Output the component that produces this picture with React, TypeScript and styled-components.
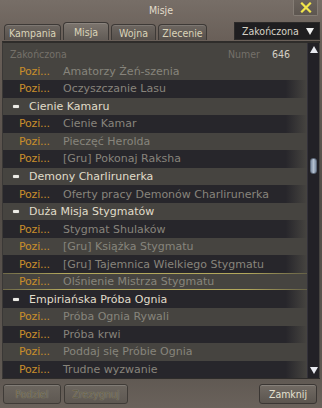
import React from "react";
import styled, { createGlobalStyle, css } from "styled-components";

const Global = createGlobalStyle`
  html, body { margin: 0; padding: 0; background: #5a534d; }
  body { width: 322px; height: 408px; overflow: hidden; }
`;

const condensed = css`
  font-family: "DejaVu Sans Condensed", "DejaVu Sans", sans-serif;
  font-stretch: condensed;
  font-size: 10.5px;
`;

const Window = styled.div`
  width: 322px;
  height: 408px;
  display: flex;
  flex-direction: column;
  font-family: "DejaVu Sans", sans-serif;
  font-size: 11px;
  background: linear-gradient(180deg, #776e67 0%, #695f58 10%, #524c47 50%, #5f5852 92%, #6a625b 100%);
  box-sizing: border-box;
`;

const TitleBar = styled.div`
  height: 20px;
  position: relative;
  display: flex;
  align-items: center;
  justify-content: center;
  color: #e2dccb;
  ${condensed}
`;

const CloseButton = styled.div`
  position: absolute;
  right: 4px;
  top: 0px;
  width: 25px;
  height: 16px;
  box-sizing: border-box;
  border: 1px solid #847c74;
  border-top: none;
  border-radius: 0 0 2px 2px;
  background: linear-gradient(180deg, #6a625b, #5d5650);
  display: flex;
  align-items: center;
  justify-content: center;
`;

const TabRow = styled.div`
  height: 20px;
  display: flex;
  align-items: flex-end;
  padding: 0 2px 0 4px;
  gap: 2px;
`;

const Tab = styled.div<{ $active?: boolean; $w: number }>`
  width: ${(p) => p.$w}px;
  height: ${(p) => (p.$active ? 18 : 16)}px;
  box-sizing: border-box;
  border: 1px solid #3d3936;
  border-bottom: none;
  border-radius: 4px 4px 0 0;
  display: flex;
  align-items: center;
  justify-content: center;
  color: #dad4b9;
  ${condensed}
  padding-top: 1px;
  background: ${(p) =>
    p.$active
      ? "linear-gradient(180deg, #7c756e, #615b56)"
      : "linear-gradient(180deg, #6d6660, #57514c)"};
  box-shadow: inset 0 1px 0 rgba(255, 255, 255, 0.12);
`;

const Spacer = styled.div`
  flex: 1;
`;

const Dropdown = styled.div`
  width: 86px;
  height: 18px;
  box-sizing: border-box;
  background: #1f1e20;
  border: 1px solid #2c2a29;
  display: flex;
  align-items: center;
  padding: 0 5px 0 7px;
  color: #d6d2c6;
  ${condensed}
  justify-content: space-between;
`;

const Panel = styled.div`
  height: 338px;
  margin: 1px 2px 0 2px;
  background: #464440;
  border-top: 2px solid #2e2c2a;
  border-left: 1px solid #3a3836;
  border-bottom: 1px solid #2e2c2a;
  display: flex;
  box-sizing: border-box;
`;

const ListArea = styled.div`
  flex: 1;
  display: flex;
  flex-direction: column;
  padding-top: 2px;
`;

const HeaderRow = styled.div`
  height: 17.6px;
  display: flex;
  align-items: center;
  padding-left: 7px;
  color: #75716a;
  ${condensed}
`;

const HeaderNumLabel = styled.span`
  margin-left: auto;
  color: #75716a;
`;

const HeaderNum = styled.span`
  color: #d4d0c5;
  width: 35px;
  margin-left: 12px;
`;

const Row = styled.div<{ $dark: boolean; $selected?: boolean }>`
  height: 17.6px;
  display: flex;
  align-items: center;
  position: relative;
  box-sizing: border-box;
  ${(p) =>
    p.$dark &&
    css`
      background: linear-gradient(90deg, #27262b 0%, #27262b 93%, rgba(39, 38, 43, 0) 100%);
    `}
  ${(p) =>
    p.$selected &&
    css`
      &::before,
      &::after {
        content: "";
        position: absolute;
        left: 0;
        right: 0;
        height: 1px;
        background: linear-gradient(
          90deg,
          rgba(170, 160, 85, 0.4),
          #b3a85c 20%,
          #b3a85c 80%,
          rgba(170, 160, 85, 0.3)
        );
      }
      &::before {
        top: 0;
      }
      &::after {
        bottom: 0;
      }
    `}
`;

const Status = styled.span`
  color: #c98e2b;
  width: 44px;
  padding-left: 16px;
  flex: none;
  letter-spacing: -0.2px;
`;

const QuestName = styled.span`
  color: #87847c;
  white-space: nowrap;
`;

const GroupRow = styled(Row)`
  padding-left: 10px;
`;

const Minus = styled.span`
  width: 6px;
  height: 3px;
  background: #ecebe6;
  border-radius: 1px;
  margin-right: 10px;
  box-shadow: 0 0 1px rgba(255, 255, 255, 0.5);
`;

const GroupName = styled.span`
  color: #e0ddca;
  white-space: nowrap;
`;

const ScrollBar = styled.div`
  width: 12px;
  margin-right: 1px;
  background: #222126;
  display: flex;
  flex-direction: column;
  align-items: center;
  padding: 3px 0 4px 0;
  box-sizing: border-box;
  border-left: 1px solid #34323a;
`;

const Arrow = styled.div<{ $down?: boolean }>`
  width: 0;
  height: 0;
  border-left: 4px solid transparent;
  border-right: 4px solid transparent;
  ${(p) => (p.$down ? "border-top: 7px solid #e8eaf0;" : "border-bottom: 7px solid #e8eaf0;")}
`;

const Track = styled.div`
  flex: 1;
  width: 100%;
  display: flex;
  justify-content: center;
`;

const Thumb = styled.div`
  width: 7px;
  height: 16px;
  margin-top: 105px;
  border-radius: 3px;
  background: linear-gradient(90deg, #7f8ea3, #b4c0cf 50%, #7f8ea3);
  border: 1px solid #5d6878;
  box-sizing: border-box;
`;

const Footer = styled.div`
  flex: 1;
  display: flex;
  align-items: center;
  padding: 0 5px 0 3px;
  gap: 3px;
`;

const Button = styled.div<{ $disabled?: boolean; $w: number }>`
  width: ${(p) => p.$w}px;
  height: 20px;
  box-sizing: border-box;
  border: 1px solid ${(p) => (p.$disabled ? "#3f3b37" : "#3a3633")};
  border-radius: 3px;
  display: flex;
  align-items: center;
  justify-content: center;
  ${condensed}
  color: ${(p) => (p.$disabled ? "#64614b" : "#e4e0d0")};
  text-shadow: ${(p) => (p.$disabled ? "0 0 1px rgba(200,195,170,0.7)" : "none")};
  background: ${(p) =>
    p.$disabled ? "linear-gradient(180deg, #6c665f, #5e5852)" : "linear-gradient(180deg, #726b64, #5b554f)"};
  box-shadow: inset 0 1px 0 rgba(255, 255, 255, 0.15);
`;

type Item =
  | { kind: "quest"; name: string; selected?: boolean }
  | { kind: "group"; name: string };

const items: Item[] = [
  { kind: "quest", name: "Amatorzy Żeń-szenia" },
  { kind: "quest", name: "Oczyszczanie Lasu" },
  { kind: "group", name: "Cienie Kamaru" },
  { kind: "quest", name: "Cienie Kamar" },
  { kind: "quest", name: "Pieczęć Herolda" },
  { kind: "quest", name: "[Gru] Pokonaj Raksha" },
  { kind: "group", name: "Demony Charlirunerka" },
  { kind: "quest", name: "Oferty pracy Demonów Charlirunerka" },
  { kind: "group", name: "Duża Misja Stygmatów" },
  { kind: "quest", name: "Stygmat Shulaków" },
  { kind: "quest", name: "[Gru] Książka Stygmatu" },
  { kind: "quest", name: "[Gru] Tajemnica Wielkiego Stygmatu" },
  { kind: "quest", name: "Olśnienie Mistrza Stygmatu", selected: true },
  { kind: "group", name: "Empiriańska Próba Ognia" },
  { kind: "quest", name: "Próba Ognia Rywali" },
  { kind: "quest", name: "Próba krwi" },
  { kind: "quest", name: "Poddaj się Próbie Ognia" },
  { kind: "quest", name: "Trudne wyzwanie" },
];

export default function App() {
  return (
    <>
      <Global />
      <Window>
        <TitleBar>
          Misje
          <CloseButton>
            <svg width="12" height="11" viewBox="0 0 12 11">
              <path d="M2 1.5 L10 9.5 M10 1.5 L2 9.5" stroke="#f2e64a" strokeWidth="2.2" strokeLinecap="square" />
            </svg>
          </CloseButton>
        </TitleBar>
        <TabRow>
          <Tab $w={57}>Kampania</Tab>
          <Tab $w={46} $active>
            Misja
          </Tab>
          <Tab $w={45}>Wojna</Tab>
          <Tab $w={49}>Zlecenie</Tab>
          <Spacer />
          <Dropdown>
            <span>Zakończona</span>
            <svg width="8" height="7" viewBox="0 0 8 7">
              <path d="M0 0 H8 L4 7 Z" fill="#f0f0f0" />
            </svg>
          </Dropdown>
        </TabRow>
        <Panel>
          <ListArea>
            <HeaderRow>
              Zakończona
              <HeaderNumLabel>Numer</HeaderNumLabel>
              <HeaderNum>646</HeaderNum>
            </HeaderRow>
            {items.map((it, i) =>
              it.kind === "group" ? (
                <GroupRow key={i} $dark={i % 2 === 1}>
                  <Minus />
                  <GroupName>{it.name}</GroupName>
                </GroupRow>
              ) : (
                <Row key={i} $dark={i % 2 === 1} $selected={it.selected}>
                  <Status>Pozi...</Status>
                  <QuestName>{it.name}</QuestName>
                </Row>
              )
            )}
          </ListArea>
          <ScrollBar>
            <Arrow />
            <Track>
              <Thumb />
            </Track>
            <Arrow $down />
          </ScrollBar>
        </Panel>
        <Footer>
          <Button $w={58} $disabled>
            Podziel
          </Button>
          <Button $w={64} $disabled>
            Zrezygnuj
          </Button>
          <Spacer />
          <Button $w={58}>Zamknij</Button>
        </Footer>
      </Window>
    </>
  );
}
